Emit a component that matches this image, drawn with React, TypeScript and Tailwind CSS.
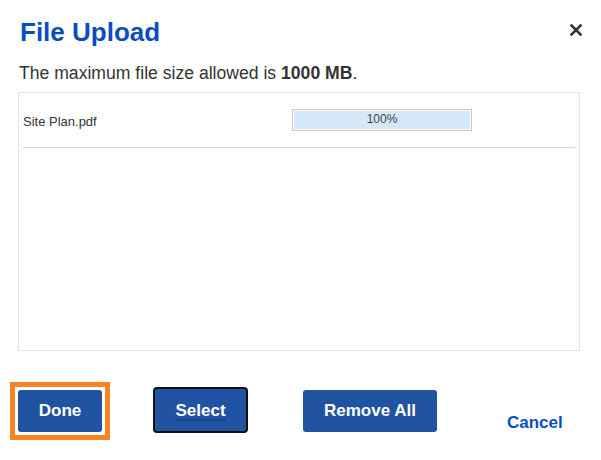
export default function App() {
  return (
    <div className="relative h-[460px] w-[601px] bg-white font-['Liberation_Sans',Arial,sans-serif] text-[#333]">
      <div className="flex items-start pt-[19px]">
        <h1 className="pl-[20px] text-[26px] font-bold leading-[26px] text-[#0b4dbf]">File Upload</h1>
        <button className="ml-auto mr-[19px] mt-[5px]" type="button" aria-label="Close">
          <svg width="12" height="12" viewBox="0 0 12 12">
            <path d="M1.5 1.5 L10.5 10.5 M10.5 1.5 L1.5 10.5" stroke="#333" strokeWidth="2.6" strokeLinecap="square" />
          </svg>
        </button>
      </div>

      <p className="mt-[16px] pl-[19px] text-[17.6px] leading-[24px] text-[#333]">
        The maximum file size allowed is <span className="font-bold">1000 MB</span>.
      </p>

      <div className="ml-[18px] mt-[7px] h-[259px] w-[562px] border border-[#e2e2e2] px-[4px]">
        <div className="flex h-[55px] items-center border-b border-[#d4d4d4]">
          <div className="mt-[4px] w-[269px] text-[13px] leading-[16px] text-[#333]">Site Plan.pdf</div>
          <div className="h-[22px] w-[180px] border border-[#c6c6c6] p-[1px]">
            <div className="flex h-full w-full items-start justify-center bg-[#d5e8f9] text-[12px] leading-[16px] text-[#444]">
              100%
            </div>
          </div>
        </div>
      </div>

      <div className="mt-[36px] flex items-start">
        <div className="ml-[10px] mt-[-5px] border-[5px] border-[#f78322] p-[3px]">
          <button
            className="block h-[42px] w-[84px] rounded-[3px] bg-[#2153a3] text-[17px] font-bold text-white"
            type="button"
          >
            Done
          </button>
        </div>
        <button
          className="ml-[43px] h-[46px] w-[95px] rounded-[4px] border-2 border-[#111] bg-[#2153a3] pt-[2px] text-[17px] font-bold text-white underline decoration-[#1b3f8c] decoration-2 underline-offset-[3px]"
          type="button"
        >
          Select
        </button>
        <button
          className="ml-[55px] mt-[3px] h-[42px] w-[134px] rounded-[3px] bg-[#2153a3] text-[17px] font-bold text-white"
          type="button"
        >
          Remove All
        </button>
        <button className="ml-[70px] mt-[26px] text-[17px] font-bold leading-[20px] text-[#0b4dbf]" type="button">
          Cancel
        </button>
      </div>
    </div>
  )
}
